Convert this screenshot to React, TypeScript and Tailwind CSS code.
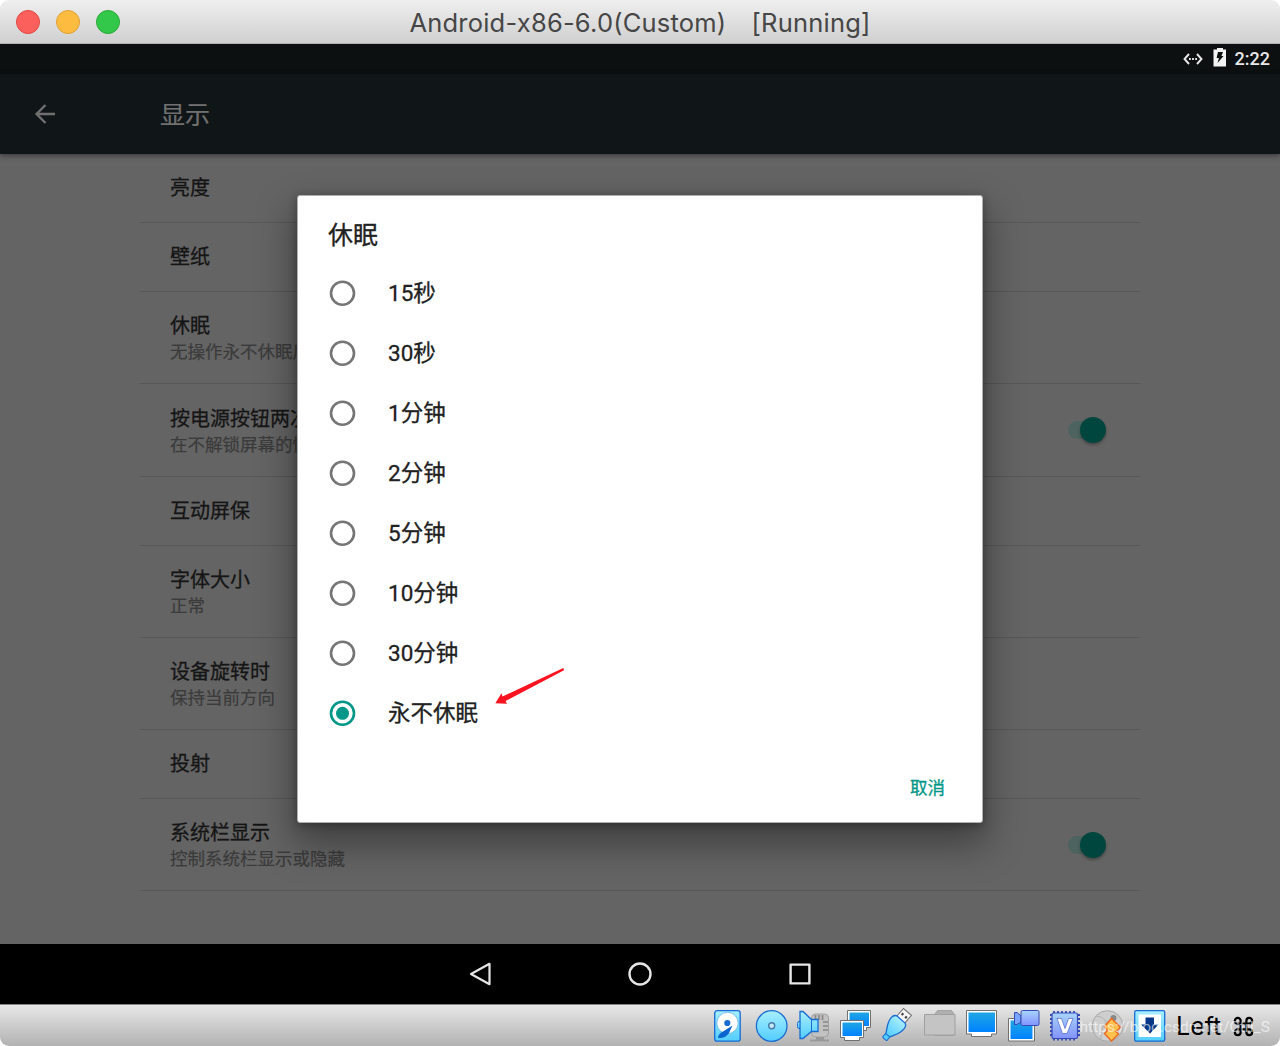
import React from "react";

type Row = { title: string; summary?: string; toggle?: boolean; height: string };

const rows: Row[] = [
  { title: "亮度", height: "h-[69px]" },
  { title: "壁纸", height: "h-[69px]" },
  { title: "休眠", summary: "无操作永不休眠后", height: "h-[92px]" },
  { title: "按电源按钮两次", summary: "在不解锁屏幕的情况", toggle: true, height: "h-[93px]" },
  { title: "互动屏保", height: "h-[69px]" },
  { title: "字体大小", summary: "正常", height: "h-[92px]" },
  { title: "设备旋转时", summary: "保持当前方向", height: "h-[92px]" },
  { title: "投射", height: "h-[69px]" },
  { title: "系统栏显示", summary: "控制系统栏显示或隐藏", toggle: true, height: "h-[92px]" },
];

const options = ["15秒", "30秒", "1分钟", "2分钟", "5分钟", "10分钟", "30分钟", "永不休眠"];

function TitleBar() {
  return (
    <header className="relative flex h-11 items-center justify-center rounded-t-[9px] border-b border-[#b3b3b3] bg-linear-to-b from-[#efefef] to-[#d0d0d0]">
      <div className="absolute left-4 top-2.5 flex gap-4">
        <span className="size-6 rounded-full border border-[#e2463f] bg-[#fc605c]" />
        <span className="size-6 rounded-full border border-[#dfa032] bg-[#fdbc40]" />
        <span className="size-6 rounded-full border border-[#27aa35] bg-[#34c84a]" />
      </div>
      <h1 className="mt-0.5 flex w-[461px] justify-between whitespace-pre font-[Inter,sans-serif] text-[25.500px] leading-none text-[#464646]">
        <span className="tracking-[0.2px]">Android-x86-6.0(Custom)</span>
        <span className="tracking-[0.2px]">[Running]</span>
      </h1>
    </header>
  );
}

function StatusBar() {
  return (
    <div className="flex h-[30px] items-center justify-end bg-[#0c1011] pr-[10px] text-[#e8e8e8]">
      <svg width="20" height="14" viewBox="0 0 20 14" className="mr-2.5 -mt-px" fill="none" stroke="currentColor" strokeWidth="1.9">
        <path d="M6 2 1.500 7 6 12M14 2l4.500 5L14 12" />
        <path d="M6 7h1.800M9.100 7h1.800M12.200 7H14" />
      </svg>
      <svg width="14" height="20" viewBox="0 0 14 20" className="mr-2 -mt-1">
        <path fill="#f4f4f4" d="M4 1h6v1.500h3V19.500H0.500V2.500H4z" />
        <path fill="#0c1011" d="M5 5h5L8.400 9h2.100L4.600 16l1.300-5H3.600z" />
      </svg>
      <span className="font-[Roboto,sans-serif] text-[18px] font-medium leading-none">2:22</span>
    </div>
  );
}

function SettingsRow({ title, summary, toggle, height }: Row) {
  return (
    <li className={`${height} flex items-center justify-between border-b border-[#575757] pl-[30px] pr-[34px]`}>
      <div className={summary ? "whitespace-nowrap pt-[3px]" : "whitespace-nowrap pt-px"}>
        <div className="text-[20px] leading-[27px] text-[#151515] [-webkit-text-stroke:0.3px_#151515]">{title}</div>
        {summary && (
          <div className="text-[17.500px] leading-[25px] text-[#3b3b3b] [-webkit-text-stroke:0.2px_#3b3b3b]">{summary}</div>
        )}
      </div>
      {toggle && (
        <div className="flex h-[26px] w-[39px] items-center justify-end">
          <span className="-mr-5 h-[18px] w-8 rounded-full bg-[#4c6360]" />
          <span className="size-[26px] rounded-full bg-[#00463f] shadow-[0_2px_3px_rgba(0,0,0,0.3)]" />
        </div>
      )}
    </li>
  );
}

function Radio({ on }: { on: boolean }) {
  return (
    <svg width="27" height="27" viewBox="0 0 27 27" fill="none" strokeWidth="2.600">
      <circle cx="13.500" cy="13.300" r="11.500" stroke={on ? "#009688" : "#757575"} />
      {on && <circle cx="13.500" cy="13.300" r="6.500" fill="#009688" />}
    </svg>
  );
}

function SleepDialog() {
  return (
    <section className="absolute left-[297px] top-[195px] h-[628px] w-[686px] rounded-[3px] border border-[#b0b0b0] bg-white text-[#212121] shadow-[0_18px_36px_4px_rgba(0,0,0,0.36),0_2px_8px_rgba(0,0,0,0.3)]">
      <h2 className="pl-[30px] pt-[22px] text-[25px] leading-9 [-webkit-text-stroke:0.3px_#212121]">休眠</h2>
      <div className="mt-[9px]">
        {options.map((label, i) => (
          <div key={label} className="flex h-[60px] items-center pl-[31px]">
            <Radio on={i === options.length - 1} />
            <span className="ml-8 text-[22.500px] leading-8 [-webkit-text-stroke:0.3px_#212121]">{label}</span>
          </div>
        ))}
      </div>
      <button className="absolute bottom-[22px] right-[37px] text-[17.500px] leading-6 text-[#009688] [-webkit-text-stroke:0.3px_#009688]">
        取消
      </button>
      <svg className="absolute left-[196px] top-[469px]" width="72" height="42" viewBox="494 665 72 42">
        <path fill="#fc1220" d="M563.300 668 564 670.200 505.500 701 507 703.800 495.300 703.300 501.500 693.300 502.500 696.500z" />
      </svg>
    </section>
  );
}

function NavBar() {
  return (
    <nav className="flex h-[60px] items-center justify-center gap-[136px] bg-black">
      <svg width="24" height="24" viewBox="0 0 24 24" fill="none" stroke="#e6e6e6" strokeWidth="2.200" strokeLinejoin="round">
        <path d="M21.500 1.800v20.400L3 12z" />
      </svg>
      <svg width="24" height="24" viewBox="0 0 24 24" fill="none" stroke="#e6e6e6" strokeWidth="2.400">
        <circle cx="12" cy="12" r="10.500" />
      </svg>
      <svg width="24" height="24" viewBox="0 0 24 24" fill="none" stroke="#e6e6e6" strokeWidth="2.400" strokeLinejoin="round">
        <rect x="2.600" y="2.600" width="18.800" height="18.800" />
      </svg>
    </nav>
  );
}

function Screen({ x, y }: { x: number; y: number }) {
  return (
    <g transform={`translate(${x} ${y})`}>
      <path d="M0 0h23v17h-4v3H4v-3H0z" fill="#fff" stroke="#707070" />
      <path d="M2 2h19.500v13.500H2z" fill="url(#screen)" />
    </g>
  );
}

const iconBox = "h-9 w-[34px] shrink-0 overflow-visible";

function DeviceIcons() {
  return (
    <div className="-mt-0.5 flex gap-2">
      <svg className={iconBox} viewBox="0 0 34 36">
        <defs>
          <linearGradient id="sky" x1="0" y1="0" x2="0" y2="1">
            <stop stopColor="#a8eeff" />
            <stop offset="1" stopColor="#52cdff" />
          </linearGradient>
          <linearGradient id="screen" x1="0" y1="0" x2="0" y2="1">
            <stop stopColor="#20a6e4" />
            <stop offset="1" stopColor="#0082ff" />
          </linearGradient>
          <linearGradient id="violet" x1="0" y1="0" x2="0" y2="1">
            <stop stopColor="#a9d4ff" />
            <stop offset="1" stopColor="#8292ff" />
          </linearGradient>
        </defs>
        <rect x="4.700" y="3.700" width="25.500" height="30.500" rx="2.500" fill="url(#sky)" stroke="#176bd2" strokeWidth="1.300" />
        <circle cx="17.500" cy="16" r="10.700" fill="#fff" stroke="#5db4ee" strokeWidth="0.800" />
        <path d="M22.500 18.500 19 26c-2 3.500-6 5.500-11 5 0-3 2-5 5-6.500z" fill="#0b65ce" />
        <circle cx="17.300" cy="16" r="3.100" fill="#176bd2" />
      </svg>
      <svg className={iconBox} viewBox="0 0 34 36">
        <circle cx="19.700" cy="19" r="15.300" fill="url(#sky)" stroke="#176bd2" strokeWidth="1.300" />
        <circle cx="19.700" cy="18.800" r="3" fill="#c4eaf8" stroke="#477aa5" strokeWidth="1.400" />
      </svg>
      <svg className={iconBox} viewBox="0 0 34 36">
        <rect x="17.500" y="7" width="17" height="23" rx="4" fill="#c2c2c2" stroke="#a0a0a0" />
        <path d="M22 30h8v3h-8zM16 32.500h19v2H16z" fill="#999" />
        <path d="M21.500 8v5M25 8v5M28.500 8v5M34 15h-5M34 19h-5M34 23h-5" stroke="#888" strokeWidth="1.700" fill="none" />
        <path d="M6.500 14.500H5q-1.500 0-1.500 2v3q0 2 1.500 2h1.500z" fill="url(#sky)" stroke="#176bd2" />
        <path d="M6 4.500h3l8.500 8H24v12h-6.500L9 31.500H6z" fill="url(#sky)" stroke="#176bd2" strokeWidth="1.300" />
        <path d="M17.500 12.500v12" stroke="#176bd2" />
      </svg>
      <svg className={iconBox} viewBox="0 0 34 36">
        <Screen x={11.500} y={3.500} />
        <Screen x={4.500} y={13.500} />
      </svg>
      <svg className={iconBox} viewBox="0 0 34 36">
        <g transform="translate(23.500 11) rotate(41)">
          <path d="M-4.800-8.500H5.800V2H-4.800z" fill="#f5f5f5" stroke="#707070" />
          <path d="M-2.800-3.500h2.200M1.800-3.500H4" stroke="#444" strokeWidth="2.400" />
          <path d="M-5 1.500H6q3 1 3 5C9 14 5 18 3.500 22.500h-5C-3 18-8 14-8 6.500q0-4 3-5z" fill="url(#sky)" stroke="#176bd2" strokeWidth="1.300" />
          <rect x="-1.800" y="22" width="5.500" height="5" rx="1" fill="#52cdff" stroke="#176bd2" />
        </g>
      </svg>
      <svg className={iconBox} viewBox="0 0 34 36">
        <path d="M14.500 7.500l3-4h14l3 4v21h-20z" fill="#afafaf" stroke="#a5a5a5" />
        <path d="M4.500 7.500h30.500v20.500h-30.500z" fill="#c4c4c4" stroke="#a0a0a0" />
      </svg>
      <svg className={iconBox} viewBox="0 0 34 36">
        <path d="M4.500 3.500h30v23.500h-5v2.500h-20v-2.500h-5z" fill="#fff" stroke="#707070" />
        <path d="M6.500 5.500h26.500v19.500h-26.500z" fill="url(#screen)" />
      </svg>
      <svg className={iconBox} viewBox="0 0 34 36">
        <path d="M4.500 11.500h26v22.500h-26z" fill="#fff" stroke="#707070" />
        <path d="M6.500 13.500h22v18.500h-22z" fill="url(#screen)" />
        <path d="M10.500 5.500h2.500l4 3.500v6l-4 2.500h-2.500z" fill="#78a5ff" stroke="#344bb5" />
        <rect x="17" y="3.500" width="18" height="15" rx="1.500" fill="url(#violet)" stroke="#344bb5" />
      </svg>
      <svg className={iconBox} viewBox="0 0 34 36">
        <path d="M8 4v29.500M12 4v29.500M16 4v29.500M20 4v29.500M24 4v29.500M28 4v29.500M4 8h30M4 12h30M4 16h30M4 20h30M4 24h30M4 28h30" stroke="#344bb5" strokeWidth="1.800" />
        <rect x="6" y="6" width="25.500" height="25.500" rx="1.500" fill="url(#violet)" stroke="#344bb5" strokeWidth="1.200" />
        <path d="M11 11.500h4.500l3.500 10 3.500-10H27L21 26.500h-4.500z" fill="#fff" stroke="#4a64c8" strokeWidth="0.700" />
      </svg>
      <svg className={iconBox} viewBox="0 0 34 36">
        <circle cx="19.500" cy="19" r="15.300" fill="#cecece" stroke="#a8a8a8" />
        <path d="M8 9q12 1 11 13M13 32q-2-16 14-22" fill="none" stroke="#b0b0b0" />
        <circle cx="25.500" cy="11" r="3" fill="#888" />
        <path d="M23.500 11.500 32.500 20.500 28 24.500 30.500 27 23.500 34 16.500 26.500 19.500 23.500 16.500 19.500z" fill="#ffc04e" stroke="#ec681d" strokeWidth="1.400" />
      </svg>
      <svg className={iconBox} viewBox="0 0 34 36">
        <rect x="4.700" y="3.700" width="30" height="30.500" rx="1.500" fill="url(#sky)" stroke="#176bd2" strokeWidth="1.300" />
        <path d="M8.500 7.500h22.500v22.500H8.500z" fill="#fff" />
        <path d="M15.500 10.500h8.500v7h4.500l-8.500 9-9-9h4.500z" fill="#063787" />
      </svg>
    </div>
  );
}

export default function App() {
  return (
    <main className="relative h-[1046px] w-[1280px] overflow-hidden bg-white font-[Roboto,'Noto_Sans_CJK_SC',sans-serif]">
      <TitleBar />
      <StatusBar />
      <div className="relative flex h-20 items-center bg-[#101618] pl-[33px] text-[#707070] shadow-[0_2px_5px_rgba(0,0,0,0.4)]">
        <svg width="24" height="24" viewBox="0 0 24 24" fill="none" stroke="currentColor" strokeWidth="2.300">
          <path d="M22 12H4M12.500 3 3.500 12l9 9" />
        </svg>
        <span className="ml-[103px] mt-0.5 text-[25px] leading-none [-webkit-text-stroke:0.2px_#707070]">显示</span>
      </div>
      <div className="h-[790px] bg-[#646464] px-[140px]">
        <ul>
          {rows.map((row) => (
            <SettingsRow key={row.title} {...row} />
          ))}
        </ul>
      </div>
      <SleepDialog />
      <div className="relative">
        <NavBar />
      </div>
      <footer className="relative flex h-[42px] items-center justify-end rounded-b-[9px] border-t border-[#858585] bg-linear-to-b from-[#e8e8e8] to-[#b2b2b2] pr-[25px]">
        <DeviceIcons />
        <span className="ml-3 mt-0.5 flex w-[79px] items-center justify-between whitespace-nowrap font-[Inter,sans-serif] text-[25px] leading-none text-black">
          Left
          <svg width="23" height="23" viewBox="0 0 24 24" fill="none" stroke="currentColor" strokeWidth="2.300">
            <path d="M15 6v12a3 3 0 1 0 3-3H6a3 3 0 1 0 3 3V6a3 3 0 1 0-3 3h12a3 3 0 1 0-3-3" />
          </svg>
        </span>
        <span className="absolute right-[10px] top-[12px] whitespace-nowrap text-[15.500px] leading-5 text-white/60">
          https://blog.csdn.net/Ctrl_S
        </span>
      </footer>
    </main>
  );
}
